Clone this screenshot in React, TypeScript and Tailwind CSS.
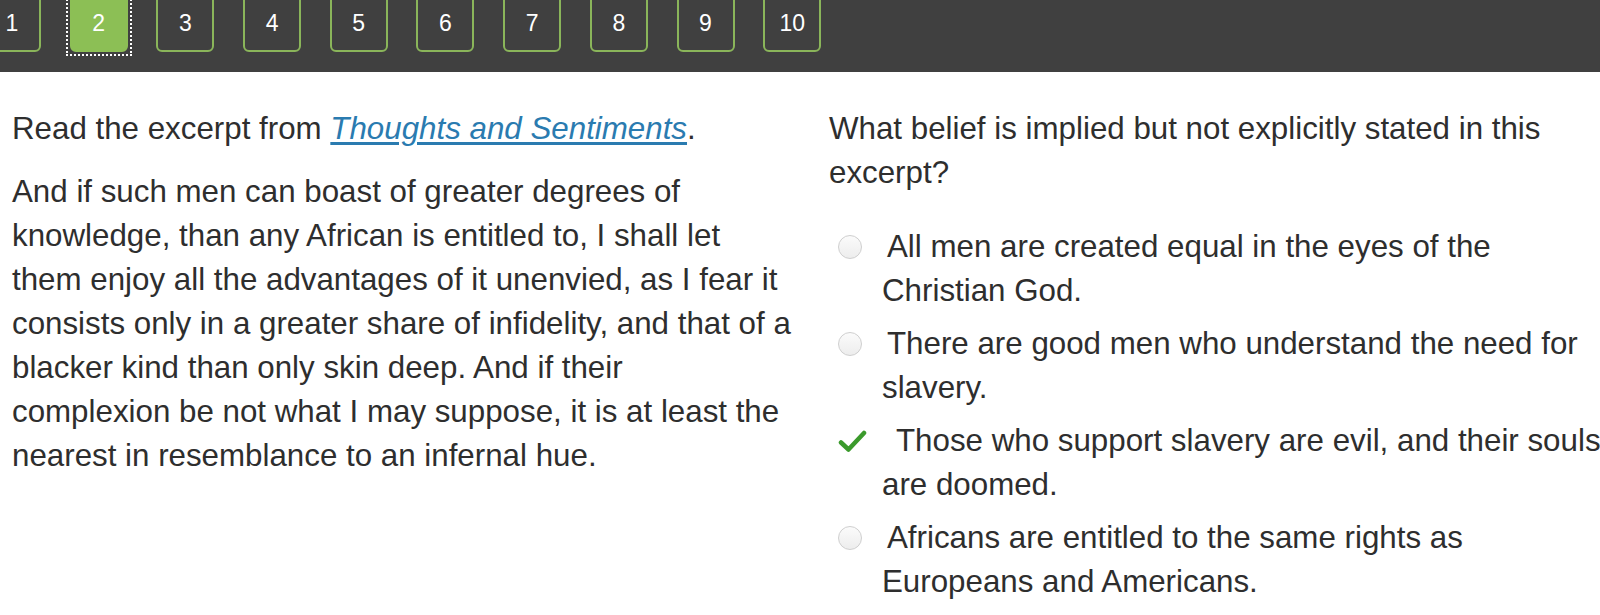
import React from 'react';

const pages = ['1', '2', '3', '4', '5', '6', '7', '8', '9', '10'];

const excerptLines = [
  'And if such men can boast of greater degrees of',
  'knowledge, than any African is entitled to, I shall let',
  'them enjoy all the advantages of it unenvied, as I fear it',
  'consists only in a greater share of infidelity, and that of a',
  'blacker kind than only skin deep. And if their',
  'complexion be not what I may suppose, it is at least the',
  'nearest in resemblance to an infernal hue.',
];

const options = [
  { text: 'All men are created equal in the eyes of the Christian God.', checked: false },
  { text: 'There are good men who understand the need for slavery.', checked: false },
  { text: 'Those who support slavery are evil, and their souls are doomed.', checked: true },
  { text: 'Africans are entitled to the same rights as Europeans and Americans.', checked: false },
];

function Radio() {
  return (
    <span className="block h-[24px] w-[24px] rounded-full border border-[#cfcfcf] bg-gradient-to-b from-[#fbfbfb] to-[#ededed]" />
  );
}

function Check() {
  return (
    <svg width="29" height="24" viewBox="0 0 29 24" className="block">
      <path
        d="M3 13.5 L10.5 20.5 L26 4"
        fill="none"
        stroke="#3b9a2c"
        strokeWidth="4.5"
        strokeLinecap="round"
        strokeLinejoin="round"
      />
    </svg>
  );
}

export default function App() {
  return (
    <div className="min-h-[615px] w-[1600px] overflow-hidden bg-white font-['Liberation_Sans',Arial,sans-serif] text-[#2e2e2e]">
      {/* question navigator */}
      <div className="h-[72px] overflow-hidden bg-[#404040]">
        <div className="ml-[-17px] mt-[-8px] flex gap-[28.7px]">
          {pages.map((p) =>
            p === '2' ? (
              <div key={p} className="outline-2 outline-dotted outline-offset-[2px] outline-white">
                <div className="flex h-[60px] w-[58px] items-center justify-center rounded-[6px] border-2 border-[#8cbf55] bg-[#8cbf55] pt-[2px] text-[23px] text-white">
                  {p}
                </div>
              </div>
            ) : (
              <div
                key={p}
                className="flex h-[60px] w-[58px] items-center justify-center rounded-[6px] border-2 border-[#8ab55a] pt-[2px] text-[23px] text-white"
              >
                {p}
              </div>
            )
          )}
        </div>
      </div>

      <div className="mt-[35px] flex text-[31.3px] leading-[44px]">
        <div className="w-[817px] shrink-0 pl-[12px] pr-[10px]">
          <p>
            Read the excerpt from{' '}
            <a href="#" className="italic text-[#2a7bb0] underline underline-offset-[3px]">
              Thoughts and Sentiments
            </a>
            .
          </p>
          <p className="mt-[19px]">
            {excerptLines.map((line, i) => (
              <React.Fragment key={i}>
                {line}
                {i < excerptLines.length - 1 && <br />}
              </React.Fragment>
            ))}
          </p>
        </div>

        <div className="w-[795px] shrink-0 pl-[12px]">
          <p className="pr-[20px]">What belief is implied but not explicitly stated in this excerpt?</p>
          <div className="mt-[30px] flex flex-col gap-[9px]">
            {options.map((o) => (
              <div key={o.text} className="relative pl-[53px]">
                <span className="absolute left-[9px] top-[10px]">{o.checked ? <Check /> : <Radio />}</span>
                <span className={o.checked ? 'inline-block w-[14px]' : 'inline-block w-[5px]'} />
                {o.text}
              </div>
            ))}
          </div>
        </div>
      </div>
    </div>
  );
}
